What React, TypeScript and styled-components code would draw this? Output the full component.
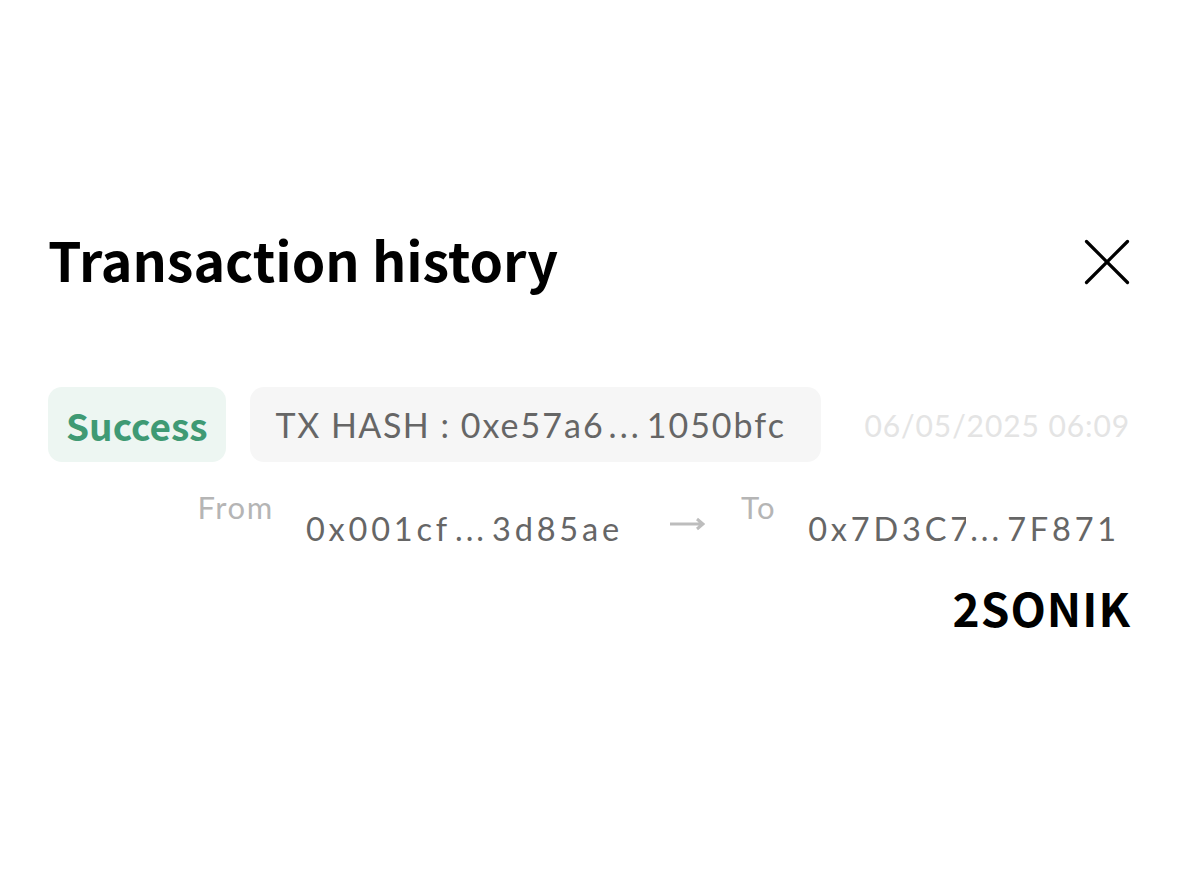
import styled, { createGlobalStyle } from 'styled-components';

const GlobalStyle = createGlobalStyle`
    html, body {
        margin: 0;
        padding: 0;
        background: #FFFFFF;
    }
    body {
        font-family: "Noto Sans CJK JP", "Noto Sans", sans-serif;
    }
`

const Page = styled.div`
    width: 1179px;
    height: 874px;
    box-sizing: border-box;
    padding: 223px 49px 0 48px;
`

const Header = styled.div`
    display: flex;
    justify-content: space-between;
    align-items: center;
    margin-bottom: 92px;

    >h1{
        margin: 0;
        font-size: 53.7px;
        line-height: 72px;
        font-weight: 700;
        color: #000;
    }
`

const CloseButton = styled.button`
    width: 48px;
    height: 48px;
    padding: 0;
    margin: 6px -1px 0 0;
    border: none;
    background: none;
    display: flex;
    align-items: center;
    justify-content: center;
    cursor: pointer;
`

const TopRow = styled.div`
    display: flex;
    align-items: center;
    gap: 24px;
`

const Badge = styled.div`
    height: 75px;
    box-sizing: border-box;
    padding: 0 18px;
    border-radius: 14px;
    background-color: #EDF6F2;
    color: #3F9A74;
    font-size: 37px;
    font-weight: 700;
    display: flex;
    align-items: center;
`

const HashBox = styled.div`
    height: 75px;
    box-sizing: border-box;
    padding: 0 35px 0 26px;
    border-radius: 14px;
    background-color: #F6F6F6;
    color: #666666;
    font-family: Lato, "Noto Sans", sans-serif;
    font-size: 34px;
    letter-spacing: 1.5px;
    display: flex;
    align-items: center;
    white-space: nowrap;
`

const HashValue = styled.span`
    letter-spacing: 2px;
`

const DateText = styled.div`
    margin-left: auto;
    font-family: Lato, "Noto Sans", sans-serif;
    font-size: 30px;
    letter-spacing: 0.9px;
    white-space: nowrap;
    color: #E4E4E4;
`

const Head = styled.span<{ $clip?: number }>`
    display: inline-block;
    overflow: hidden;
    vertical-align: bottom;
    white-space: nowrap;
    max-width: ${p => p.$clip ? `${p.$clip}px` : 'none'};
`

const Dots = styled.span`
    letter-spacing: 3px;
    margin: 0 5px 0 4px;
`

const AddressRow = styled.div`
    display: flex;
    justify-content: flex-end;
    align-items: flex-start;
    padding-right: 10px;
    margin-top: 27px;
`

const Label = styled.span`
    font-family: Lato, "Noto Sans", sans-serif;
    font-size: 31px;
    line-height: 36px;
    letter-spacing: 1.6px;
    color: #B5B5B5;
    margin-right: 32px;
`

const Address = styled.span`
    font-family: Lato, "Noto Sans", sans-serif;
    font-size: 32.5px;
    line-height: 40px;
    letter-spacing: 3.8px;
    color: #666666;
    margin-top: 20px;
    white-space: nowrap;
`

const Arrow = styled.svg`
    margin: 27px 36px 0 46px;
`

const Amount = styled.div`
    text-align: right;
    font-size: 46px;
    font-weight: 700;
    letter-spacing: 1px;
    color: #000;
    margin: 25px -1px 0 0;
`

const Shortened = ({ head, tail, clip }: { head: string; tail: string; clip?: number }) => (
    <>
        <Head $clip={clip}>{head}</Head>
        <Dots>...</Dots>
        {tail}
    </>
)

const App = () => {
    return (
        <>
            <GlobalStyle />
            <Page>
                <Header>
                    <h1>Transaction history</h1>
                    <CloseButton aria-label="close">
                        <svg width="48" height="48" viewBox="0 0 48 48">
                            <path d="M3.5 3.5 L44.5 44.5 M44.5 3.5 L3.5 44.5" stroke="#000" strokeWidth="3.2" strokeLinecap="round" />
                        </svg>
                    </CloseButton>
                </Header>
                <TopRow>
                    <Badge>Success</Badge>
                    <HashBox>
                        TX HASH :&nbsp;<HashValue><Shortened head="0xe57a6" tail="1050bfc" /></HashValue>
                    </HashBox>
                    <DateText>06/05/2025 06:09</DateText>
                </TopRow>
                <AddressRow>
                    <Label>From</Label>
                    <Address><Shortened head="0x001cf" tail="3d85ae" /></Address>
                    <Arrow width="36" height="16" viewBox="0 0 36 16">
                        <path d="M1 8 H34 M28 3 L34 8 L28 13" stroke="#BDBDBD" strokeWidth="3" fill="none" />
                    </Arrow>
                    <Label>To</Label>
                    <Address><Shortened head="0x7D3C74a" tail="7F871" clip={158} /></Address>
                </AddressRow>
                <Amount>2SONIK</Amount>
            </Page>
        </>
    );
}

export default App;
